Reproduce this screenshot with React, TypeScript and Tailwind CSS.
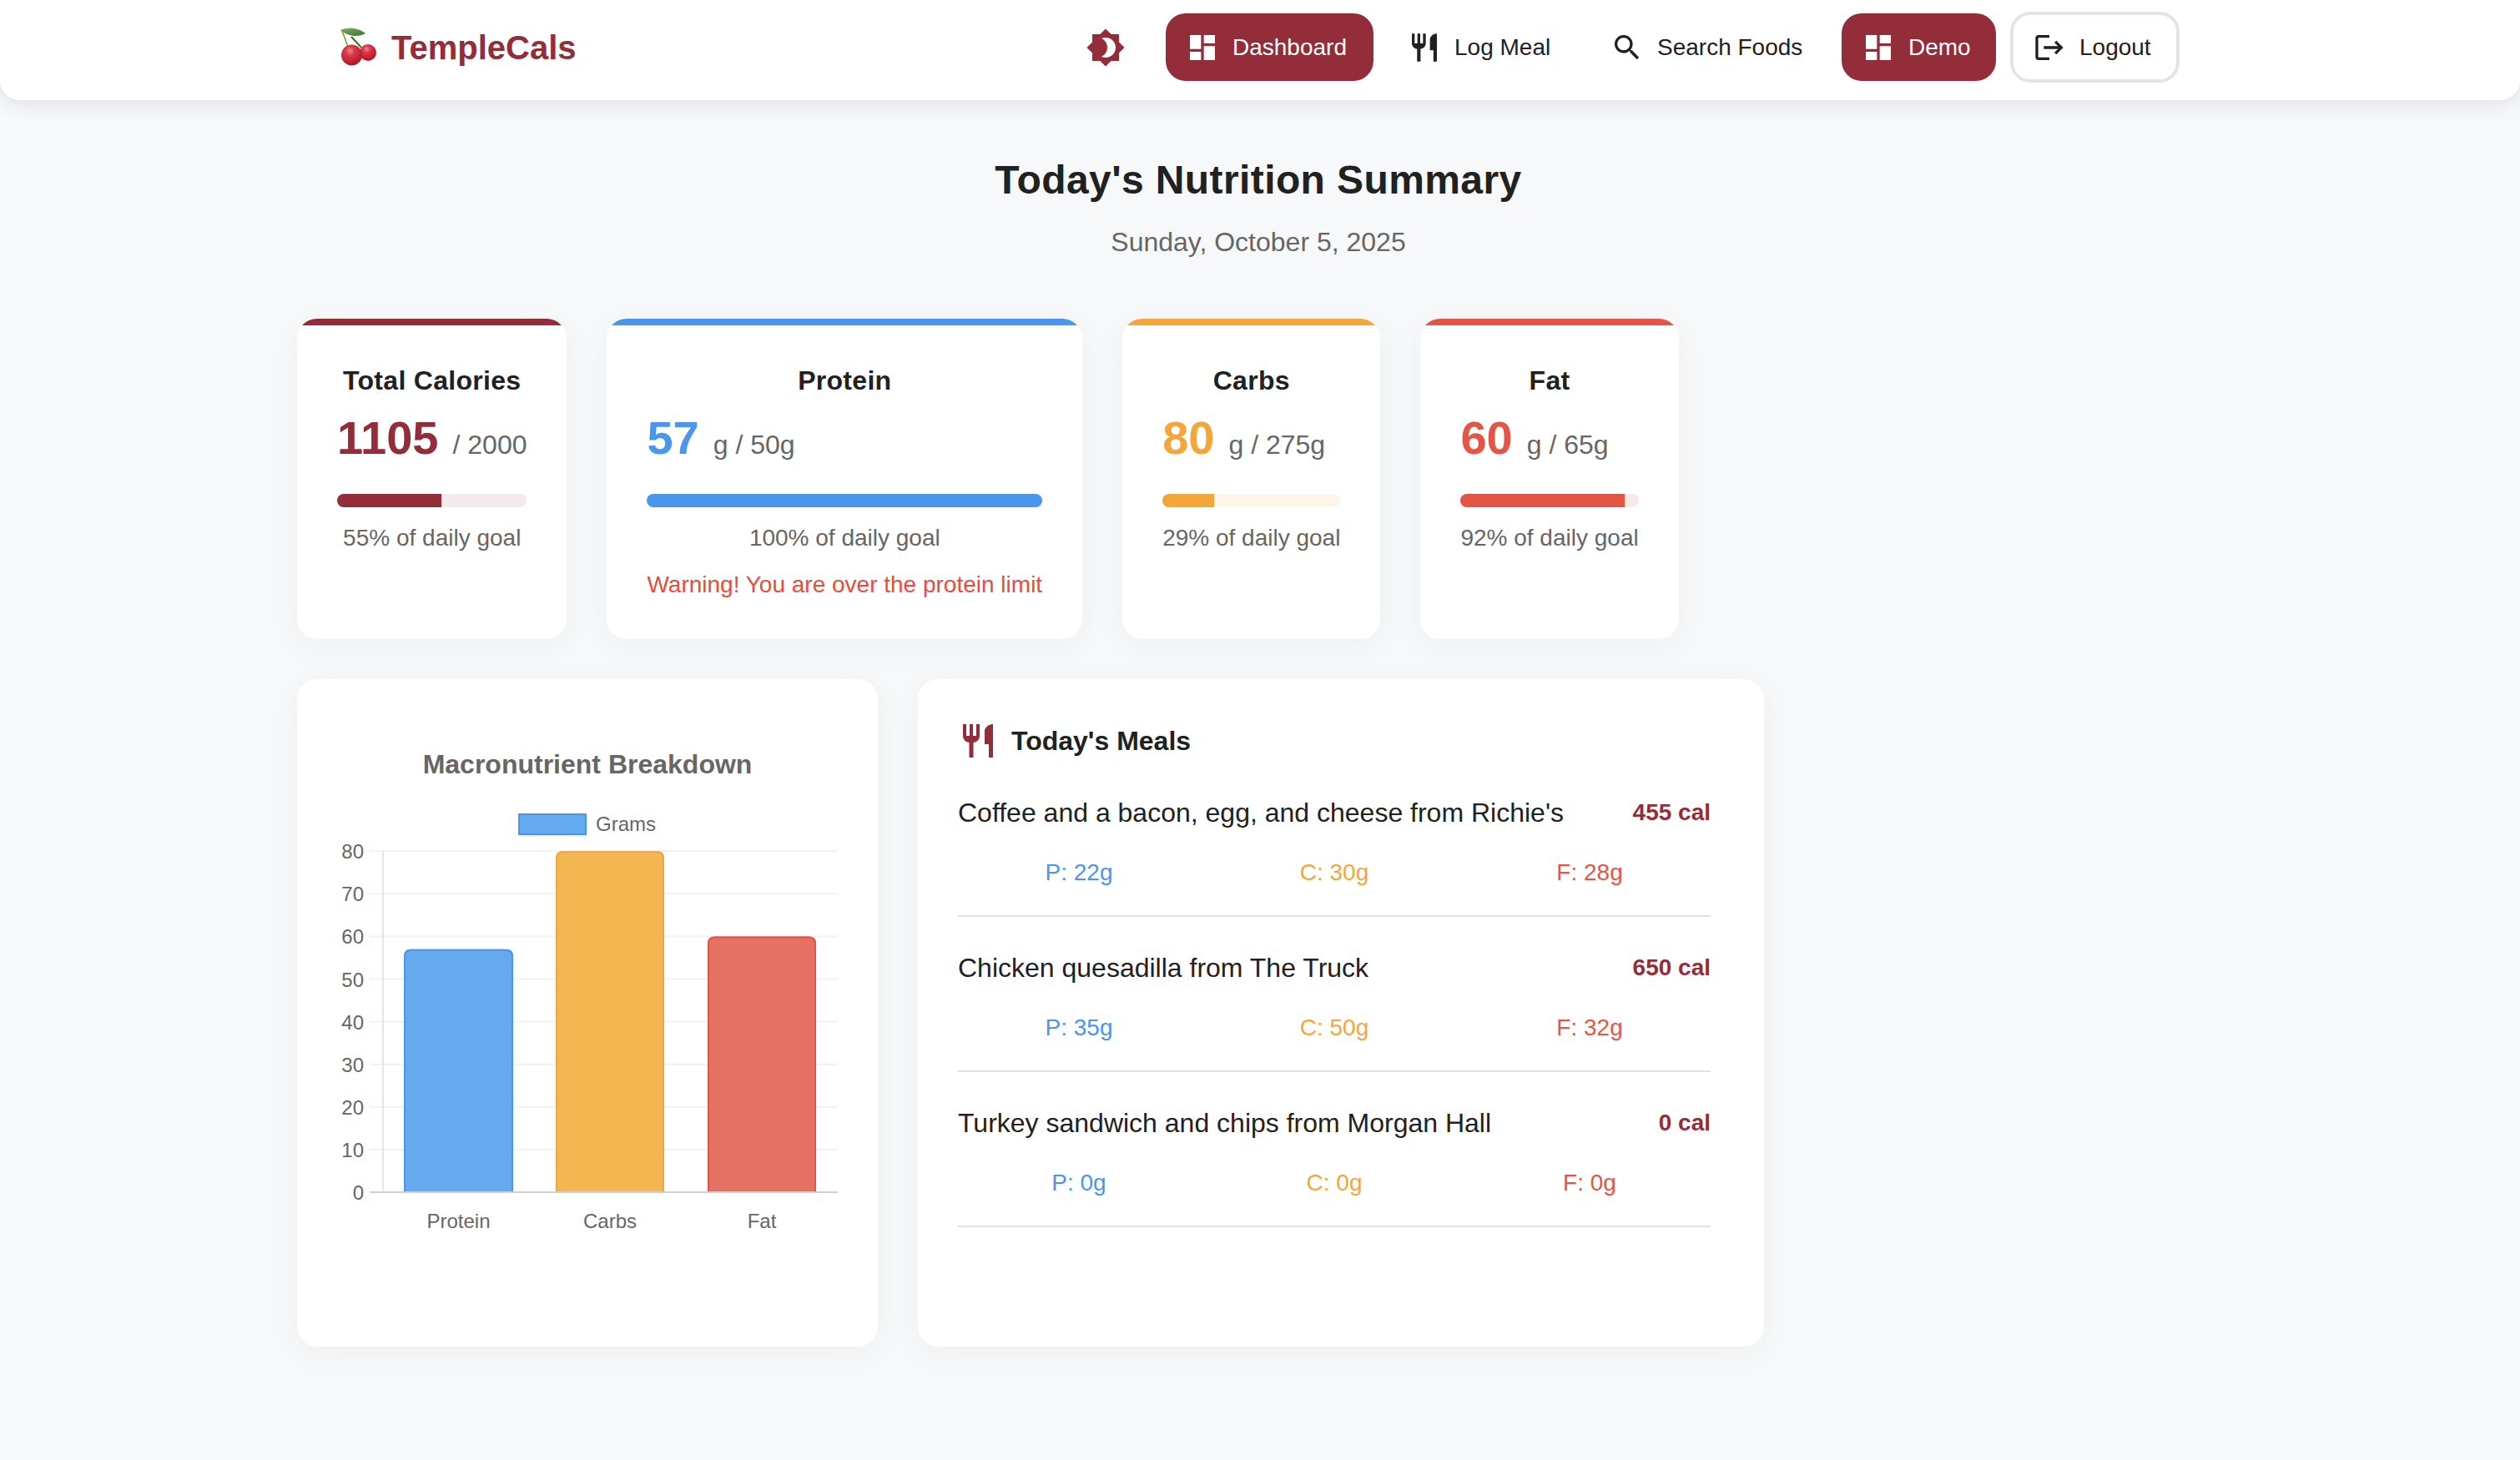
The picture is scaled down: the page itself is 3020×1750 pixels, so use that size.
import React from "react";

const P = "#922d39";
const BLUE = "#4a96ed";
const ORANGE = "#f4a63b";
const RED = "#e45545";

function Mui({ d, className }: { d: string; className?: string }) {
  return (
    <svg viewBox="0 0 24 24" fill="currentColor" className={className}>
      <path d={d} />
    </svg>
  );
}

const DASH = "M3 13h8V3H3v10zm0 8h8v-6H3v6zm10 0h8V11h-8v10zm0-18v6h8V3h-8z";
const REST = "M11 9H9V2H7v7H5V2H3v7c0 2.12 1.66 3.84 3.75 3.97V22h2.5v-9.03C11.34 12.84 13 11.12 13 9V2h-2v7zm5-3v8h2.5v8H21V2c-2.76 0-5 2.24-5 4z";
const SEARCH = "M15.5 14h-.79l-.28-.27C15.41 12.59 16 11.11 16 9.5 16 5.91 13.09 3 9.5 3S3 5.91 3 9.5 5.91 16 9.5 16c1.61 0 3.09-.59 4.23-1.57l.27.28v.79l5 4.99L20.49 19l-4.99-5zm-6 0C7.01 14 5 11.99 5 9.5S7.01 5 9.5 5 14 7.01 14 9.5 11.99 14 9.5 14z";
const LOGOUT = "m17 7-1.41 1.41L18.17 11H8v2h10.17l-2.58 2.58L17 17l5-5zM4 5h8V3H4c-1.1 0-2 .9-2 2v14c0 1.1.9 2 2 2h8v-2H4V5z";
const B4 = "M20 8.69V4h-4.69L12 .69 8.69 4H4v4.69L.69 12 4 15.31V20h4.69L12 23.31 15.31 20H20v-4.69L23.31 12 20 8.69zM12 18c-.89 0-1.74-.2-2.5-.55C11.56 16.5 13 14.42 13 12s-1.44-4.5-3.5-5.45C10.26 6.2 11.11 6 12 6c3.31 0 6 2.69 6 6s-2.69 6-6 6z";

function Cherry() {
  return (
    <svg viewBox="0 0 48 48" className="h-[48px] w-[48px] shrink-0">
      <defs>
        <radialGradient id="ch1" cx="0.42" cy="0.3" r="0.78">
          <stop offset="0" stopColor="#ee8790" />
          <stop offset="0.28" stopColor="#d93a4b" />
          <stop offset="0.8" stopColor="#b81a2c" />
          <stop offset="1" stopColor="#9c1020" />
        </radialGradient>
        <linearGradient id="lf" x1="0" y1="0" x2="1" y2="1">
          <stop offset="0" stopColor="#86ab66" />
          <stop offset="1" stopColor="#3d7430" />
        </linearGradient>
      </defs>
      <path d="M7 4 L14 23" stroke="#7d9a2e" strokeWidth="1.6" fill="none" />
      <path d="M18 11 L30 24" stroke="#3f6b1f" strokeWidth="2" fill="none" />
      <path d="M5 3 C12 -0.5 26 -0.5 35 7 C27 12 13 11 5 3Z" fill="url(#lf)" />
      <circle cx="38" cy="30" r="10" fill="url(#ch1)" />
      <circle cx="18.5" cy="33" r="12.5" fill="url(#ch1)" />
    </svg>
  );
}

function NavBtn({ icon, label, active, width }: { icon: string; label: string; active?: boolean; width: string }) {
  return (
    <div
      className={`flex h-[81px] items-center whitespace-nowrap rounded-[24px] pl-[24px] text-[28px] ${width} ${
        active ? "bg-[#922d39] text-white" : "text-[#212121]"
      }`}
    >
      <Mui d={icon} className="mr-[16px] h-[40px] w-[40px] shrink-0" />
      <span>{label}</span>
    </div>
  );
}

const stats = [
  { title: "Total Calories", value: "1105", rest: "/ 2000", pct: 55, color: P, track: "#f4e9eb" },
  { title: "Protein", value: "57", rest: "g / 50g", pct: 100, color: BLUE, track: "#e9f2fc", warn: "Warning! You are over the protein limit" },
  { title: "Carbs", value: "80", rest: "g / 275g", pct: 29, color: ORANGE, track: "#fef5ea" },
  { title: "Fat", value: "60", rest: "g / 65g", pct: 92, color: RED, track: "#f8e9e9" },
];

function StatCard({ s }: { s: (typeof stats)[number] }) {
  return (
    <div className="relative overflow-hidden rounded-[24px] bg-white px-[48px] pb-[44px] pt-[48px] shadow-[0_8px_40px_rgba(0,0,0,0.04)]">
      <div className="absolute inset-x-0 top-0 h-[8px]" style={{ backgroundColor: s.color }} />
      <div className="text-center text-[32px] font-bold leading-[52px] tracking-[0.3px] text-[#212121]">{s.title}</div>
      <div className="mt-[10px] flex h-[66px] items-baseline whitespace-nowrap">
        <span className="text-[56px] font-bold leading-[66px]" style={{ color: s.color }}>{s.value}</span>
        <span className="ml-[17px] text-[32px] text-[#666666]">{s.rest}</span>
      </div>
      <div className="mt-[34px] h-[16px] overflow-hidden rounded-[8px]" style={{ backgroundColor: s.track }}>
        <div className="h-full" style={{ width: `${s.pct}%`, backgroundColor: s.color }} />
      </div>
      <div className="mt-[16px] whitespace-nowrap text-center text-[28px] leading-[42px] text-[#666666]">{s.pct}% of daily goal</div>
      {s.warn && <div className="mt-[14px] whitespace-nowrap text-center text-[28px] leading-[42px] text-[#e74c3c]">{s.warn}</div>}
    </div>
  );
}

function Chart() {
  const y0 = 1429 - 814;
  const step = 51.1;
  const x = (v: number) => v - 356;
  const ticks = [0, 10, 20, 30, 40, 50, 60, 70, 80];
  const bars = [
    { l: "Protein", v: 57, a: 484, b: 615, fill: "#65a9ee", stroke: BLUE },
    { l: "Carbs", v: 80, a: 666, b: 796, fill: "#f4b651", stroke: "#eea73f" },
    { l: "Fat", v: 60, a: 848, b: 978, fill: "#e57165", stroke: RED },
  ];
  return (
    <svg viewBox="0 0 696 800" className="block h-[800px] w-[696px]" fontFamily="'Liberation Sans', Arial, sans-serif">
      <text x={348} y={113} textAnchor="middle" fontSize={32} fontWeight={700} fill="#666666">Macronutrient Breakdown</text>
      <rect x={x(622)} y={162} width={80} height={24} fill="#65a9ee" stroke={BLUE} strokeWidth={2} />
      <text x={x(714)} y={182} fontSize={24} fill="#666666">Grams</text>
      {ticks.map((t) => {
        const y = y0 - t * (step / 10);
        return (
          <g key={t}>
            <line x1={x(443)} x2={x(1004)} y1={y} y2={y} stroke={t === 0 ? "#d0d0d0" : "#f1f1f1"} strokeWidth={2} />
            <text x={x(436)} y={y + 9} textAnchor="end" fontSize={24} fill="#666666">{t}</text>
          </g>
        );
      })}
      <line x1={x(459)} x2={x(459)} y1={y0 - 8 * step} y2={y0} stroke="#e5e5e5" strokeWidth={2} />
      <line x1={x(459)} x2={x(1004)} y1={y0} y2={y0} stroke="#d0d0d0" strokeWidth={2} />
      {bars.map((b) => {
        const top = y0 - b.v * (step / 10);
        const l = x(b.a);
        const r = x(b.b);
        return (
          <g key={b.l}>
            <path d={`M${l} ${y0 - 1}V${top + 8}Q${l} ${top} ${l + 8} ${top}H${r - 8}Q${r} ${top} ${r} ${top + 8}V${y0 - 1}Z`} fill={b.fill} />
            <path d={`M${l + 1} ${y0 - 1}V${top + 9}Q${l + 1} ${top + 1} ${l + 9} ${top + 1}H${r - 9}Q${r - 1} ${top + 1} ${r - 1} ${top + 9}V${y0 - 1}`} fill="none" stroke={b.stroke} strokeWidth={2} />
            <text x={(l + r) / 2} y={658} textAnchor="middle" fontSize={24} fill="#666666">{b.l}</text>
          </g>
        );
      })}
    </svg>
  );
}

const meals = [
  { name: "Coffee and a bacon, egg, and cheese from Richie's", cal: 455, p: 22, c: 30, f: 28 },
  { name: "Chicken quesadilla from The Truck", cal: 650, p: 35, c: 50, f: 32 },
  { name: "Turkey sandwich and chips from Morgan Hall", cal: 0, p: 0, c: 0, f: 0 },
];

export default function App() {
  return (
    <div className="min-h-screen bg-[#f7f8fa] font-['Liberation_Sans',Arial,sans-serif] text-[#212121]">
      <nav className="flex h-[120px] items-center justify-between rounded-b-[24px] bg-white pb-[7px] pl-[403px] pr-[408px] shadow-[0_4px_24px_rgba(0,0,0,0.1)]">
        <div className="flex items-center gap-[18px]">
          <Cherry />
          <span className="text-[40px] font-bold text-[#922d39]">TempleCals</span>
        </div>
        <div className="flex items-center">
          <Mui d={B4} className="mr-[48px] h-[48px] w-[48px] text-[#922d39]" />
          <div className="flex items-center gap-[17px]">
            <NavBtn icon={DASH} label="Dashboard" active width="w-[249px]" />
            <NavBtn icon={REST} label="Log Meal" width="w-[226px]" />
            <NavBtn icon={SEARCH} label="Search Foods" width="w-[284px]" />
            <NavBtn icon={DASH} label="Demo" active width="w-[185px]" />
            <div className="flex h-[85px] w-[203px] items-center whitespace-nowrap rounded-[24px] border-[4px] border-[#e4e4e4] pl-[23px] text-[28px] text-[#212121]">
              <Mui d={LOGOUT} className="mr-[16px] h-[40px] w-[40px] shrink-0" />
              <span>Logout</span>
            </div>
          </div>
        </div>
      </nav>
      <main className="pb-[136px] pl-[356px] pr-[360px]">
        <h1 className="mt-[64px] text-center text-[48px] font-bold leading-[64px] tracking-[0.4px] text-[#212121]">Today's Nutrition Summary</h1>
        <p className="mt-[18px] text-center text-[32px] leading-[48px] text-[#666666]">Sunday, October 5, 2025</p>
        <div className="mt-[68px] flex items-stretch gap-[48px]">
          {stats.map((s) => (
            <StatCard key={s.title} s={s} />
          ))}
        </div>
        <div className="mt-[48px] flex gap-[48px]">
          <div className="h-[800px] w-[696px] overflow-hidden rounded-[24px] bg-white shadow-[0_8px_40px_rgba(0,0,0,0.04)]">
            <Chart />
          </div>
          <div className="h-[800px] w-[1014px] rounded-[24px] bg-white pl-[48px] pr-[64px] pt-[50px] shadow-[0_8px_40px_rgba(0,0,0,0.04)]">
            <div className="flex h-[48px] items-center gap-[16px]">
              <Mui d={REST} className="h-[48px] w-[48px] text-[#922d39]" />
              <span className="text-[32px] font-bold text-[#212121]">Today's Meals</span>
            </div>
            <div className="mt-[1px]">
              {meals.map((m) => (
                <div key={m.name} className="h-[186px] border-b-[2px] border-[#e0e0e0] pt-[37px]">
                  <div className="flex h-[48px] items-center justify-between">
                    <span className="text-[32px] text-[#212121]">{m.name}</span>
                    <span className="text-[28px] font-bold text-[#922d39]">{m.cal} cal</span>
                  </div>
                  <div className="mt-[24px] grid grid-cols-3 gap-[16px] text-center text-[28px] leading-[48px]">
                    <span className="text-[#4a96ed]">P: {m.p}g</span>
                    <span className="text-[#f4a63b]">C: {m.c}g</span>
                    <span className="text-[#e45545]">F: {m.f}g</span>
                  </div>
                </div>
              ))}
            </div>
          </div>
        </div>
      </main>
    </div>
  );
}
